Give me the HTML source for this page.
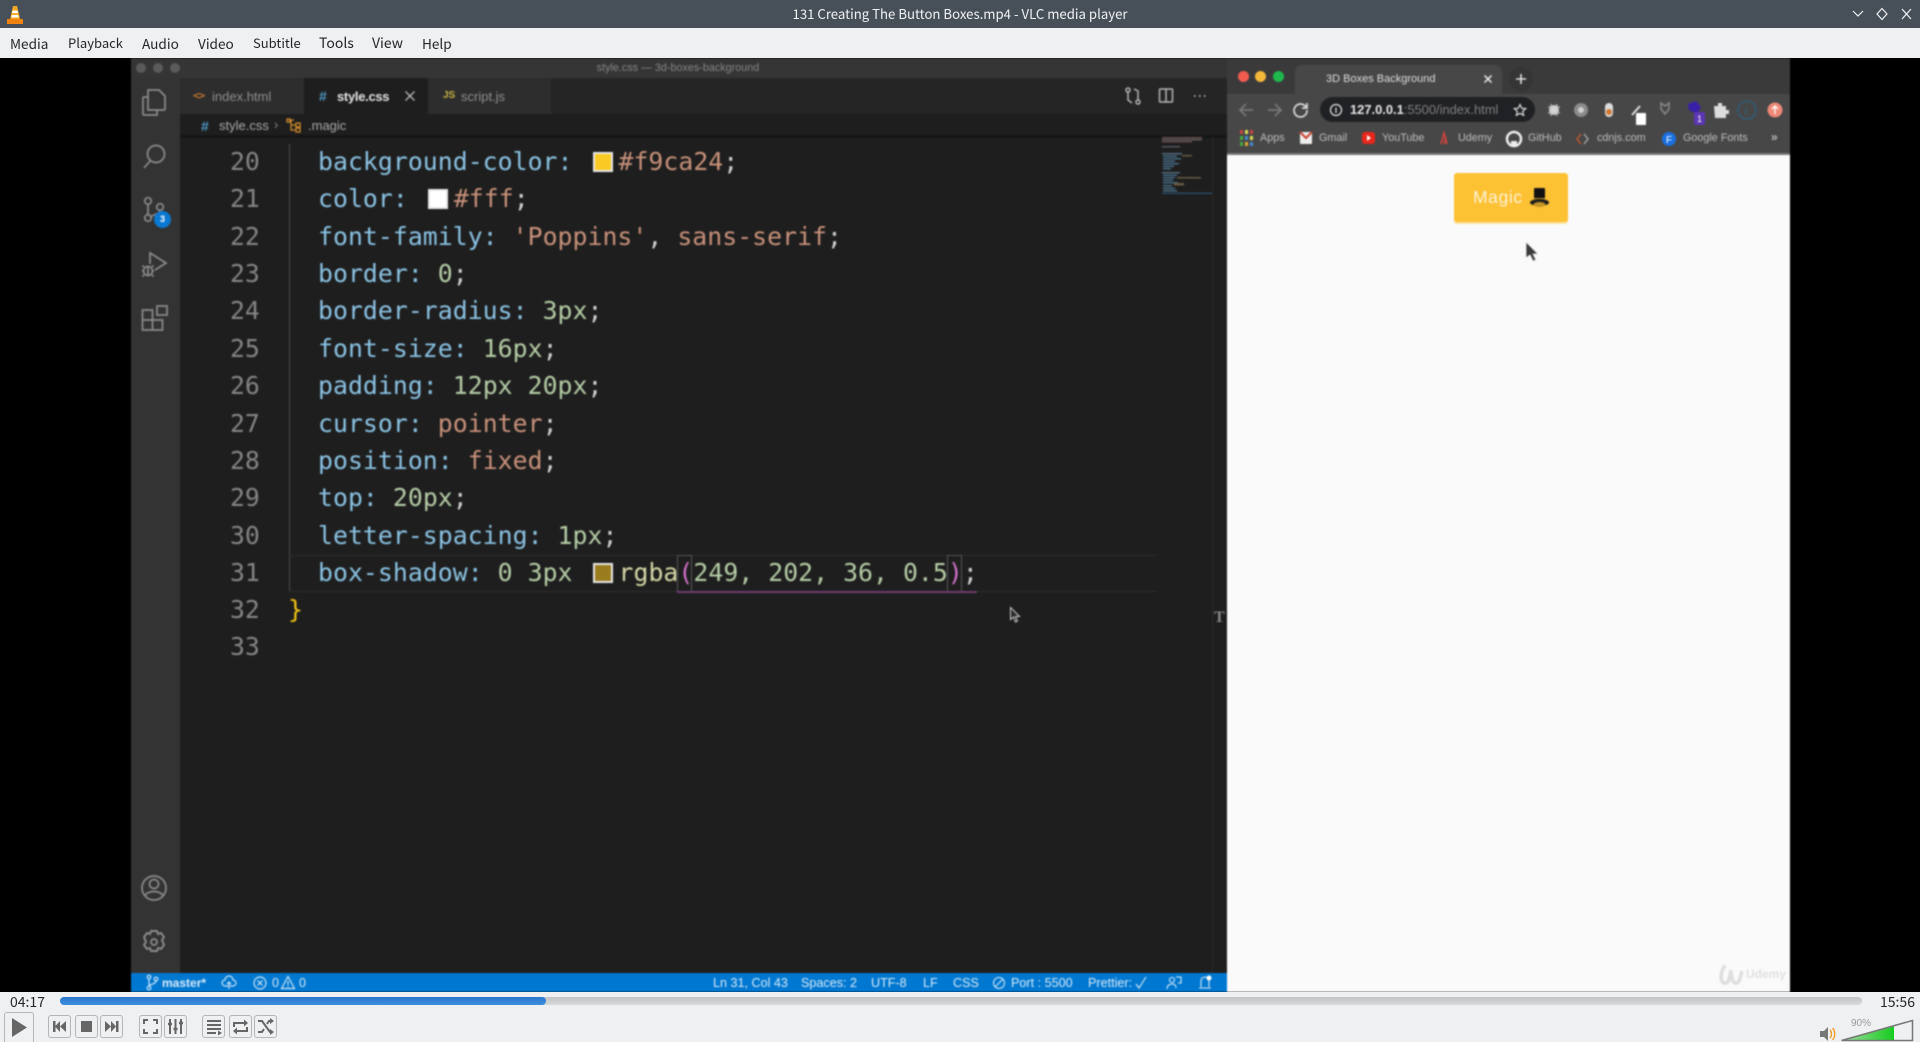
<!DOCTYPE html>
<html><head><meta charset="utf-8"><title>VLC</title>
<style>
html,body{margin:0;padding:0;width:1920px;height:1042px;overflow:hidden;background:#000;font-family:"Liberation Sans",sans-serif}
*{box-sizing:border-box}
.a{position:absolute}
.t{position:absolute;white-space:nowrap;line-height:20px;margin-top:-10px}
.ui{font-family:"Noto Sans CJK SC","Liberation Sans",sans-serif;font-size:14px;color:#232629}
#video{position:absolute;left:0;top:58px;width:1920px;height:934px;background:#000;overflow:hidden}
#inner{position:absolute;left:0;top:-58px;width:1920px;height:1042px;filter:blur(.75px)}
.ln{position:absolute;left:230px;font:24.8px/37px "DejaVu Sans Mono",monospace;color:#858585;white-space:pre}
.c{position:absolute;left:318px;font:24.8px/37px "DejaVu Sans Mono",monospace;letter-spacing:.04px;color:#d0d0d0;white-space:pre}
.p{color:#8ac3e4}.s{color:#c8917a}.n{color:#b5cda6}.f{color:#d8d8a8}.q{color:#d070c8}
.sw{display:inline-block;width:20px;height:20px;margin:0 5.5px;border:2px solid #e8e8e8;vertical-align:-2px}
.vs{font-size:12.6px;color:#d9ebf9}
.bk{font-size:10.8px;color:#bdbdbd}
.btn{position:absolute;top:1015px;width:23px;height:23px;border:1px solid #b4b6b8;border-radius:3px;background:#eff0f2}
.btn svg{position:absolute;left:0;top:0}
</style></head><body>

<!-- title bar -->
<div class="a" style="left:0;top:0;width:1920px;height:28px;background:#474f59"></div>
<svg class="a" style="left:5px;top:5px" width="20" height="20" viewBox="0 0 20 20"><path d="M8 1h4l2.200 9 1 5H5l1-5z" fill="#f5a623"/><path d="M7.600 5.500h4.800l.6 2.600H7z" fill="#fff"/><path d="M6.800 10h6.400l.6 2.500H6.200z" fill="#fff"/><path d="M2 14h16v5H2z" fill="#f0820f"/></svg>
<div class="t ui" style="left:660px;top:14px;width:600px;text-align:center;color:#f0f2f4;font-size:13.2px">131 Creating The Button Boxes.mp4 - VLC media player</div>
<svg class="a" style="left:1848px;top:6px" width="68" height="16" viewBox="0 0 68 16" fill="none" stroke="#eef0f2" stroke-width="1.2"><path d="M5 5l5 5 5-5"/><path d="M34 2.500l5 5.500-5 5.500-5-5.500z"/><path d="M54 3l9 10M63 3l-9 10"/></svg>

<!-- menu bar -->
<div class="a" style="left:0;top:28px;width:1920px;height:30px;background:#eff0f2"></div>
<div class="t ui" style="left:10px;top:43px;font-size:13.6px">Media</div>
<div class="t ui" style="left:68px;top:43px;font-size:13px">Playback</div>
<div class="t ui" style="left:142px;top:43px;font-size:13.6px">Audio</div>
<div class="t ui" style="left:198px;top:43px;font-size:13.6px">Video</div>
<div class="t ui" style="left:253px;top:43px;font-size:13px">Subtitle</div>
<div class="t ui" style="left:319px;top:43px">Tools</div>
<div class="t ui" style="left:372px;top:43px">View</div>
<div class="t ui" style="left:422px;top:43px;font-size:13.6px">Help</div>

<div id="video"><div id="inner">
  <!-- VS Code -->
  <div class="a" style="left:131px;top:58px;width:1096px;height:934px;background:#1e1e1e"></div>
  <div class="a" style="left:131px;top:58px;width:1096px;height:20px;background:#353535"></div>
  <div class="a" style="left:131px;top:78px;width:49px;height:895px;background:#333"></div>
  <div class="a" style="left:180px;top:78px;width:1047px;height:36px;background:#252526"></div>
  <div class="a" style="left:180px;top:78px;width:124px;height:36px;background:#2d2d2d"></div>
  <div class="a" style="left:304px;top:78px;width:124px;height:36px;background:#1e1e1e"></div>
  <div class="a" style="left:428px;top:78px;width:123px;height:36px;background:#2d2d2d"></div>
  <div class="a" style="left:180px;top:135px;width:1047px;height:3px;background:#161616"></div>

  <div class="a" style="left:136px;top:63px;width:10px;height:10px;border-radius:50%;background:#5a5a5a"></div>
  <div class="a" style="left:153px;top:63px;width:10px;height:10px;border-radius:50%;background:#5a5a5a"></div>
  <div class="a" style="left:170px;top:63px;width:10px;height:10px;border-radius:50%;background:#5a5a5a"></div>
  <div class="t" style="left:528px;top:68px;width:300px;text-align:center;font-size:10.8px;color:#858585">style.css — 3d-boxes-background</div>

  <div class="t" style="left:193px;top:96px;font:bold 11px/20px 'DejaVu Sans Mono',monospace;letter-spacing:-1px;color:#c5762f">&lt;&gt;</div>
  <div class="t" style="left:212px;top:97px;font-size:13px;color:#8f8f8f">index.html</div>
  <div class="t" style="left:319px;top:96px;font:bold 14px/20px 'Liberation Sans';color:#4d9ac4">#</div>
  <div class="t" style="left:337px;top:97px;font-size:13px;font-weight:bold;letter-spacing:-.3px;color:#e4e4e4">style.css</div>
  <svg class="a" style="left:404px;top:90px" width="12" height="12" fill="none" stroke="#cfcfcf" stroke-width="1.200"><path d="M1.500 1.500l9 9M10.500 1.500l-9 9"/></svg>
  <div class="t" style="left:443px;top:96px;font:bold 10px/20px 'Liberation Sans';color:#c6b343">JS</div>
  <div class="t" style="left:461px;top:97px;font-size:13px;color:#8f8f8f">script.js</div>

  <svg class="a" style="left:1124px;top:86px" width="90" height="20" fill="none" stroke="#b5b5b5" stroke-width="1.500"><circle cx="4" cy="4" r="2"/><circle cx="14" cy="16" r="2"/><path d="M4 6v8l4 3M14 14V5l-4-2"/><rect x="35.500" y="3" width="13" height="13" rx="1"/><path d="M42 3v13"/><path d="M70 10h1.500M75 10h1.500M80 10h1.500" stroke-width="1.800"/></svg>

  <div class="t" style="left:201px;top:126px;font:bold 14px/20px 'Liberation Sans';color:#4d9ac4">#</div>
  <div class="t" style="left:219px;top:126px;font-size:13px;color:#a9a9a9">style.css</div>
  <div class="t" style="left:274px;top:125px;font-size:13px;color:#888">›</div>
  <svg class="a" style="left:286px;top:118px" width="16" height="16" fill="none" stroke="#d08a2b" stroke-width="1.300"><path d="M3 2h5M5 2v10h5M5 7h5"/><path d="M1 1h3v3H1zM10 5h4v4h-4zM10 10h4v4h-4z"/></svg>
  <div class="t" style="left:308px;top:126px;font-size:13px;color:#a9a9a9">.magic</div>

  <!-- activity icons -->
  <svg class="a" style="left:131px;top:78px" width="49" height="895" fill="none" stroke="#8b8b8b" stroke-width="1.700">
    <path d="M17 12h11l6 6v13a1 1 0 0 1-1 1H17z"/><path d="M17 19h-4a1 1 0 0 0-1 1v16a1 1 0 0 0 1 1h13v-5"/>
    <circle cx="25" cy="76" r="8.500"/><path d="M19 83L13 90"/>
    <circle cx="17" cy="123" r="3.300"/><circle cx="17" cy="140" r="3.300"/><circle cx="29" cy="129" r="3.300"/><path d="M17 126.500v10M29 132.500c0 4-8 4-10 7"/>
    <path d="M19 186V175L35 185L24 192"/><circle cx="17" cy="193" r="4.500"/><path d="M13 189l-1.500-1.500M21 189l1.500-1.500M12.500 193H11M21.500 193H23M13 197l-1.500 1.500M21 197l1.500 1.500M17 188.500v9"/>
    <path d="M11.500 232h10v10h10v10h-20z"/><path d="M11.500 242h10v10"/><rect x="26" y="228" width="10" height="9"/>
    <circle cx="23" cy="810" r="12"/><circle cx="23" cy="806" r="4.500"/><path d="M14 818c2-6 16-6 18 0"/>
    <circle cx="23" cy="864" r="3"/><path d="M20 853h6l1 3 3-1 3 4-2 3 2 5-3 4-3-1-1 3h-6l-1-3-3 1-3-4 2-3-2-5 3-4 3 1z" stroke-width="1.900"/>
  </svg>
  <div class="a" style="left:154px;top:211px;width:17px;height:17px;border-radius:50%;background:#0a78d2;color:#fff;font:bold 9px/17px 'Liberation Sans';text-align:center">3</div>

  <!-- code -->
  <div class="a" style="left:289px;top:144px;width:1px;height:447px;background:#4a4a4a"></div>
  <div class="a" style="left:289px;top:555px;width:868px;height:37px;border-top:1px solid #2d2d2d;border-bottom:1px solid #2d2d2d"></div>
  <div class="a" style="left:677px;top:555px;width:15px;height:37px;border:1px solid #555"></div>
  <div class="a" style="left:947px;top:555px;width:15px;height:37px;border:1px solid #555"></div>
  <div class="a" style="left:677px;top:591px;width:300px;height:2px;background:#6f3c72"></div>

  <div class="ln" style="top:143px">20</div><div class="ln" style="top:180px">21</div><div class="ln" style="top:218px">22</div><div class="ln" style="top:255px">23</div><div class="ln" style="top:292px">24</div><div class="ln" style="top:330px">25</div><div class="ln" style="top:367px">26</div><div class="ln" style="top:404.500px">27</div><div class="ln" style="top:441.500px">28</div><div class="ln" style="top:479px">29</div><div class="ln" style="top:516.500px">30</div><div class="ln" style="top:554px">31</div><div class="ln" style="top:591px">32</div><div class="ln" style="top:628px">33</div>

  <div class="c" style="top:143px"><span class="p">background-color:</span> <span class="sw" style="background:#f9ca24"></span><span class="s">#f9ca24</span>;</div>
  <div class="c" style="top:180px"><span class="p">color:</span> <span class="sw" style="background:#fff"></span><span class="s">#fff</span>;</div>
  <div class="c" style="top:218px"><span class="p">font-family:</span> <span class="s">'Poppins'</span>, <span class="s">sans-serif</span>;</div>
  <div class="c" style="top:255px"><span class="p">border:</span> <span class="n">0</span>;</div>
  <div class="c" style="top:292px"><span class="p">border-radius:</span> <span class="n">3px</span>;</div>
  <div class="c" style="top:330px"><span class="p">font-size:</span> <span class="n">16px</span>;</div>
  <div class="c" style="top:367px"><span class="p">padding:</span> <span class="n">12px 20px</span>;</div>
  <div class="c" style="top:404.500px"><span class="p">cursor:</span> <span class="s">pointer</span>;</div>
  <div class="c" style="top:441.500px"><span class="p">position:</span> <span class="s">fixed</span>;</div>
  <div class="c" style="top:479px"><span class="p">top:</span> <span class="n">20px</span>;</div>
  <div class="c" style="top:516.500px"><span class="p">letter-spacing:</span> <span class="n">1px</span>;</div>
  <div class="c" style="top:554px"><span class="p">box-shadow:</span> <span class="n">0 3px</span> <span class="sw" style="background:#9a7c1e"></span><span class="f">rgba</span><span class="q">(</span><span class="n">249, 202, 36, 0.5</span><span class="q">)</span>;</div>
  <div class="c" style="top:591px;left:288px;color:#f2c316">}</div>

  <svg class="a" style="left:1009px;top:606px" width="12" height="18" fill="#2a2a2a" stroke="#c8c8c8" stroke-width="1"><path d="M1.500 1.500v12l3-2.500 2 5 2-1-2-4.500h4z"/></svg>
  <div class="t" style="left:1214px;top:618px;font:bold 16px/20px 'Liberation Serif';color:#888">T</div>

  <!-- minimap -->
  <svg class="a" style="left:1160px;top:135px;opacity:.8" width="55" height="62" shape-rendering="crispEdges">
    <rect x="2" y="2" width="40" height="1.500" fill="#7a5a58"/><rect x="2" y="4" width="40" height="1.500" fill="#6a6a70"/><rect x="2" y="6" width="30" height="1.500" fill="#7a5a58"/>
    <rect x="2" y="11" width="18" height="1.500" fill="#5c666e"/>
    <rect x="2" y="18" width="20" height="1.500" fill="#5f7f98"/><rect x="22" y="20" width="10" height="1.500" fill="#7a6a4a"/>
    <rect x="3" y="20.500" width="14" height="1.500" fill="#4f7f9e"/><rect x="3" y="23" width="18" height="1.500" fill="#4f7f9e"/><rect x="3" y="25.500" width="12" height="1.500" fill="#4f7f9e"/><rect x="3" y="28" width="16" height="1.500" fill="#4f7f9e"/><rect x="3" y="30.500" width="11" height="1.500" fill="#4f7f9e"/><rect x="3" y="33" width="8" height="1.500" fill="#4f7f9e"/>
    <rect x="2" y="37" width="18" height="1.500" fill="#5f7f98"/>
    <rect x="3" y="39.500" width="14" height="1.500" fill="#4f7f9e"/><rect x="17" y="42" width="24" height="1.500" fill="#7a6a4a"/><rect x="3" y="42" width="12" height="1.500" fill="#4f7f9e"/><rect x="3" y="44.500" width="10" height="1.500" fill="#4f7f9e"/><rect x="3" y="47" width="15" height="1.500" fill="#4f7f9e"/><rect x="14" y="48" width="10" height="2.500" fill="#7a6a4a"/><rect x="3" y="50" width="9" height="1.500" fill="#4f7f9e"/><rect x="3" y="52.500" width="12" height="1.500" fill="#4f7f9e"/><rect x="3" y="55" width="14" height="1.500" fill="#4f7f9e"/>
    <rect x="2" y="57.500" width="50" height="1.500" fill="#2a5676"/>
  </svg>
  <div class="a" style="left:1212px;top:137px;width:1px;height:836px;background:#2a2a2a"></div>

  <!-- status bar -->
  <div class="a" style="left:131px;top:973px;width:1096px;height:19px;background:#0077d0"></div>
  <svg class="a" style="left:145px;top:974px" width="110" height="18" fill="none" stroke="#cfe6f8" stroke-width="1.200">
    <circle cx="4" cy="3" r="1.800"/><circle cx="4" cy="14" r="1.800"/><circle cx="11" cy="5" r="1.800"/><path d="M4 5v7M11 7c0 3-6 3-7 5"/>
    <path d="M79 12h-3a3 3 0 0 1 0-6 4 4 0 0 1 8 0 3 3 0 0 1 0 6h-3M80 8v7M78 10l2-2 2 2" transform="translate(4,0)"/>
  </svg>
  <svg class="a" style="left:252px;top:974px" width="50" height="18" fill="none" stroke="#cfe6f8" stroke-width="1.200"><circle cx="8" cy="9" r="6"/><path d="M5.500 6.500l5 5M10.500 6.500l-5 5"/><path d="M36 2.500l6.500 12h-13zM36 7v4M36 12v1.200"/></svg>
  <div class="t vs" style="left:162px;top:983px;font-weight:bold;font-size:12px">master*</div>
  <div class="t vs" style="left:272px;top:983px">0</div>
  <div class="t vs" style="left:299px;top:983px">0</div>
  <div class="t vs" style="left:713px;top:983px">Ln 31, Col 43</div>
  <div class="t vs" style="left:801px;top:983px">Spaces: 2</div>
  <div class="t vs" style="left:871px;top:983px">UTF-8</div>
  <div class="t vs" style="left:923px;top:983px">LF</div>
  <div class="t vs" style="left:953px;top:983px">CSS</div>
  <svg class="a" style="left:992px;top:975px" width="14" height="16" fill="none" stroke="#d9ebf9" stroke-width="1"><circle cx="7" cy="8" r="5.500"/><path d="M3 12l8-8"/></svg>
  <div class="t vs" style="left:1011px;top:983px">Port : 5500</div>
  <div class="t vs" style="left:1088px;top:983px">Prettier:</div>
  <svg class="a" style="left:1135px;top:975px;overflow:visible" width="90" height="16" fill="none" stroke="#d9ebf9" stroke-width="1.100"><path d="M1 9l3 4 7-11"/><circle cx="37" cy="5" r="2.500"/><path d="M32 14c0-4 3-5 5-5s4 1 4 4M41 2h5v6h-3"/><path d="M64 13h12M66 12V6a4 4 0 0 1 8 0v6"/><circle cx="74" cy="3" r="2.500" fill="#fff" stroke="none"/></svg>

  <!-- Browser -->
  <div class="a" style="left:1227px;top:58px;width:563px;height:36px;background:#3a3a3a"></div>
  <div class="a" style="left:1295px;top:65px;width:207px;height:29px;background:#474747;border-radius:7px 7px 0 0"></div>
  <div class="a" style="left:1238px;top:71px;width:11px;height:11px;border-radius:50%;background:#f05b50"></div>
  <div class="a" style="left:1255px;top:71px;width:11px;height:11px;border-radius:50%;background:#f5b73a"></div>
  <div class="a" style="left:1273px;top:71px;width:11px;height:11px;border-radius:50%;background:#1fb84c"></div>
  <div class="t" style="left:1326px;top:79px;font-size:11px;color:#dcdcdc">3D Boxes Background</div>
  <svg class="a" style="left:1483px;top:74px" width="10" height="10" stroke="#eee" stroke-width="1.500"><path d="M1.500 1.500l7 7M8.500 1.500l-7 7"/></svg>
  <div class="a" style="left:1509px;top:67px;width:24px;height:24px;border-radius:50%;background:#353535"></div>
  <svg class="a" style="left:1515px;top:73px" width="12" height="12" stroke="#e0e0e0" stroke-width="1.600"><path d="M6 1v10M1 6h10"/></svg>

  <div class="a" style="left:1227px;top:94px;width:563px;height:59px;background:#474747"></div>
  <div class="a" style="left:1227px;top:153px;width:563px;height:2px;background:#777"></div>
  <svg class="a" style="left:1238px;top:101px" width="72" height="18" fill="none" stroke-width="1.700"><path d="M15 9H2M8 3L2 9l6 6" stroke="#777"/><path d="M30 9h13M37 3l6 6-6 6" stroke="#777"/><path d="M68 6a6.500 6.500 0 1 0 1 3M69 2v5h-5" stroke="#d8d8d8"/></svg>
  <div class="a" style="left:1320px;top:97px;width:215px;height:25px;border-radius:13px;background:#202124"></div>
  <svg class="a" style="left:1329px;top:102px" width="14" height="15" fill="none" stroke="#e8e8e8" stroke-width="1.200"><circle cx="7" cy="8" r="5.500"/><path d="M7 5.500V11"/></svg>
  <div class="t" style="left:1350px;top:110px;font-size:12.9px;font-weight:bold;color:#e8e8e8">127.0.0.1<span style="color:#808080;font-weight:normal">:5500/index.html</span></div>
  <svg class="a" style="left:1513px;top:103px" width="14" height="14" fill="none" stroke="#ddd" stroke-width="1.200"><path d="M7 1.500l1.700 3.700 4 .4-3 2.700.9 4L7 10.300l-3.600 2 .9-4-3-2.700 4-.4z"/></svg>
  <!-- extensions -->
  <svg class="a" style="left:1545px;top:96px" width="240" height="30">
    <circle cx="9" cy="14" r="5" fill="#d5d5d5"/><path d="M3 11h12M3 17h12M6 8v12M12 8v12" stroke="#c5c5c5"/>
    <circle cx="36" cy="14" r="7" fill="#8a8a8a"/><circle cx="36" cy="14" r="3" fill="#cfcfcf"/>
    <rect x="60" y="7" width="8" height="14" rx="4" fill="#ddd"/><circle cx="64" cy="16" r="3" fill="#d5772f"/>
    <path d="M87 19l8-9" stroke="#ddd" stroke-width="2"/><rect x="91" y="17" width="10" height="12" rx="1" fill="#fff"/>
    <path d="M116 7l4 3 4-3v6l-4 5-4-5z" fill="none" stroke="#8a8a8a" stroke-width="1.500"/>
    <path d="M143 8l8-3 5 6-4 7-8-4z" fill="#3a1fa8"/><rect x="149" y="16" width="11" height="13" rx="2" fill="#5b36b5"/><text x="152" y="26" font-size="9" fill="#fff" font-family="Liberation Sans">1</text>
    <path d="M169 10h4v-3h4v3h4v4h3v4h-3v4h-11z" fill="#ddd"/>
    <circle cx="202" cy="14" r="9" fill="none" stroke="#2a5f80" stroke-width="1.300"/><text x="200" y="18" font-size="9" fill="#2a6a90" font-family="Liberation Sans">t</text>
    <circle cx="230" cy="14" r="7.500" fill="#ee8878"/><path d="M230 10v8M227 13l3-3 3 3" stroke="#fff" fill="none" stroke-width="1.300"/>
  </svg>
  <!-- bookmarks -->
  <svg class="a" style="left:1240px;top:127px" width="450" height="25">
    <rect x="0" y="3" width="3" height="4" fill="#c44"/><rect x="5" y="3" width="3" height="4" fill="#dd5"/><rect x="10" y="3" width="3" height="4" fill="#c44"/>
    <rect x="0" y="9" width="3" height="4" fill="#4a4"/><rect x="5" y="9" width="3" height="4" fill="#48c"/><rect x="10" y="9" width="3" height="4" fill="#dd5"/>
    <rect x="0" y="15" width="3" height="4" fill="#4a4"/><rect x="5" y="15" width="3" height="4" fill="#da3"/><rect x="10" y="15" width="3" height="4" fill="#48c"/>
    <rect x="60" y="5" width="12" height="12" rx="1" fill="#eee"/><path d="M60 5l6 6 6-6" fill="none" stroke="#c9402f" stroke-width="2"/>
    <rect x="122" y="5" width="13" height="12" rx="3" fill="#e8261c"/><path d="M127 8v6l4-3z" fill="#fff"/>
    <path d="M201 17l3-11 3 11M204 17l2-7" fill="none" stroke="#d0433c" stroke-width="1.600"/>
    <circle cx="274" cy="12" r="7" fill="none" stroke="#eee" stroke-width="2.500"/><path d="M271 18v-4h6v4" fill="#eee"/>
    <path d="M341 7l-4 5 4 5" fill="none" stroke="#b5562c" stroke-width="1.600"/><path d="M344 7l4 5-4 5" fill="none" stroke="#999" stroke-width="1.600"/>
    <circle cx="429" cy="12" r="7" fill="#1a6fe0"/><text x="426" y="16" font-size="10" fill="#fff" font-family="Liberation Sans">F</text>
  </svg>
  <div class="t bk" style="left:1260px;top:138px">Apps</div>
  <div class="t bk" style="left:1319px;top:138px">Gmail</div>
  <div class="t bk" style="left:1382px;top:138px">YouTube</div>
  <div class="t bk" style="left:1458px;top:138px">Udemy</div>
  <div class="t bk" style="left:1528px;top:138px">GitHub</div>
  <div class="t bk" style="left:1597px;top:138px">cdnjs.com</div>
  <div class="t bk" style="left:1683px;top:138px">Google Fonts</div>
  <div class="t bk" style="left:1771px;top:137px;font-weight:bold;font-size:12px">»</div>

  <!-- page -->
  <div class="a" style="left:1227px;top:155px;width:563px;height:837px;background:#fafafa"></div>
  <div class="a" style="left:1454px;top:173px;width:114px;height:49px;background:#fdc134;border-radius:3px;box-shadow:0 2px 0 #fce3a0"></div>
  <div class="t" style="left:1473px;top:197px;font-size:17.5px;letter-spacing:.6px;color:#fdf3d8">Magic</div>
  <svg class="a" style="left:1529px;top:187px" width="21" height="22"><rect x="5" y="1" width="11" height="13" rx="1" fill="#111"/><rect x="5" y="11" width="11" height="3" fill="#b88a1e"/><ellipse cx="10.500" cy="15.500" rx="9.500" ry="3.500" fill="#1d1d1d"/><ellipse cx="10.500" cy="17.500" rx="6" ry="2.500" fill="#c39426"/></svg>
  <svg class="a" style="left:1523px;top:240px" width="20" height="24"><path d="M3 2v16l4-3 3 6 3-1-3-6h5z" fill="#3a3a3a" stroke="#eee" stroke-width=".8"/></svg>
  <!-- udemy watermark -->
  <svg class="a" style="left:1716px;top:962px" width="30" height="26" fill="none" stroke="#dedede" stroke-width="3.500"><path d="M9 3C5 10 3 18 8 21c5 2 6-8 7-13 0 6 1 13 5 13s4-6 6-12"/></svg>
  <div class="t" style="left:1746px;top:974px;font-size:12px;font-weight:bold;color:#e0e0e0">Udemy</div>
</div></div>

<!-- VLC controls -->
<div class="a" style="left:0;top:992px;width:1920px;height:50px;background:#eff0f2"></div>
<div class="t ui" style="left:10px;top:1002px;font-size:14px">04:17</div>
<div class="t ui" style="left:1880px;top:1002px;font-size:14px">15:56</div>
<div class="a" style="left:60px;top:997px;width:1802px;height:8px;border-radius:4px;background:linear-gradient(#c2c4c6,#d8d9db)"></div>
<div class="a" style="left:60px;top:997px;width:486px;height:8px;border-radius:4px;background:linear-gradient(#2a78cc,#3d8ee0)"></div>

<div class="a" style="left:4px;top:1012px;width:30px;height:30px;border:1px solid #b4b6b8;border-bottom:0;border-radius:3px 3px 0 0;background:#eff0f2"></div>
<svg class="a" style="left:11px;top:1017px" width="18" height="21"><path d="M1 1l15 9.500L1 20z" fill="#666"/></svg>

<div class="btn" style="left:48px"><svg width="21" height="21" fill="#666"><path d="M4 5h2.500v11H4zM11 5v11l-5-5.500zM17 5v11l-6-5.500z"/></svg></div>
<div class="btn" style="left:75px"><svg width="21" height="21" fill="#666"><rect x="5" y="5" width="11" height="11"/></svg></div>
<div class="btn" style="left:100px"><svg width="21" height="21" fill="#666"><path d="M4 5v11l6-5.500zM10 5v11l5-5.500zM15 5h2.500v11H15z"/></svg></div>
<div class="btn" style="left:139px"><svg width="21" height="21" fill="none" stroke="#666" stroke-width="2"><path d="M4 8V4h4M13 4h4v4M17 13v4h-4M8 17H4v-4"/></svg></div>
<div class="btn" style="left:164px"><svg width="21" height="21" fill="none" stroke="#666" stroke-width="2"><path d="M5 3v15M10.500 3v15M16 3v15"/><path d="M3 8h4M8.500 13h4M14 7h4" stroke-width="2.500"/></svg></div>
<div class="btn" style="left:202px"><svg width="21" height="21" fill="#666"><path d="M4 4h14v2H4zM4 8h14v2H4zM4 12h14v2H4zM4 16h9v2H4zM15 14.500l4 2.500-4 2.500z"/></svg></div>
<div class="btn" style="left:229px"><svg width="21" height="21" fill="none" stroke="#666" stroke-width="2"><path d="M4 11V7h11M4 15h13v-4"/><path d="M14 3.500l4 3.500-4 3.500z" fill="#666" stroke="none"/><path d="M7 11.500L3 15l4 3.500z" fill="#666" stroke="none"/></svg></div>
<div class="btn" style="left:254px"><svg width="21" height="21" fill="none" stroke="#666" stroke-width="2"><path d="M3 5h4l8 11h2M3 16h4l2-3M12 8l2-3h3"/><path d="M15 2l4 3-4 3zM15 13l4 3-4 3z" fill="#666" stroke="none"/></svg></div>

<svg class="a" style="left:1820px;top:1026px" width="16" height="16"><path d="M0 5h4l4-4v14l-4-4H0z" fill="#777"/><path d="M10 4c2 2 2 6 0 8M12.500 2c3 3 3 9 0 12" fill="none" stroke="#f39a1d" stroke-width="1.300"/></svg>
<svg class="a" style="left:1840px;top:1018px" width="76" height="24"><defs><linearGradient id="g" x1="0" x2="1" y1="0" y2="0"><stop offset="0" stop-color="#9fdc9f"/><stop offset="1" stop-color="#17cc1f"/></linearGradient></defs><path d="M54 8.500V22H2z" fill="url(#g)"/><path d="M1.500 22.500L72.500 2.500V22.500z" fill="none" stroke="#777" stroke-width="1.500"/></svg>
<div class="t" style="left:1851px;top:1024px;font-size:10px;color:#9a9a9a">90%</div>
</body></html>
